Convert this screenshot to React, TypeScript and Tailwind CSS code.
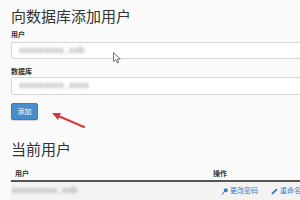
import React from 'react';

const font = { fontFamily: '"Liberation Sans", "Noto Sans CJK SC", sans-serif' };

function Blur({ text, className = '' }: { text: string; className?: string }) {
  return <span className={`blur-[1.4px] text-[#a8a8a8] font-bold ${className}`}>{text}</span>;
}

export default function App() {
  return (
    <div className="relative w-[300px] h-[200px] overflow-hidden bg-[#fafafa] text-[#333]" style={font}>
      <div className="w-[340px] pl-[11px] pt-[7px]">
        <h1 className="text-[15px] leading-[20px] h-[20px] font-normal">向数据库添加用户</h1>

        <div className="mt-[3px] text-[7px] leading-[10px] h-[10px] font-bold">用户</div>
        <div className="mt-[2px] h-[17px] bg-white border border-[#d6d6d6] rounded-[2px] flex items-center pl-[7px] text-[9px]">
          <Blur text="xxxxxxxxx_xxb" />
        </div>

        <div className="mt-[8px] text-[7px] leading-[10px] h-[10px] font-bold">数据库</div>
        <div className="h-[18px] bg-white border border-[#d6d6d6] rounded-[2px] flex items-center pl-[7px] text-[9px]">
          <Blur text="xxxxxxxxx_xxxx" />
        </div>

        <button className="mt-[8px] w-[27px] h-[17px] bg-[#4a8dcc] border border-[#3b7bb8] rounded-[2px] text-white text-[7px] leading-none flex items-center justify-center shadow-[0_1px_1px_rgba(0,0,0,0.15)]">
          添加
        </button>

        <h2 className="mt-[20px] text-[15px] leading-[20px] h-[20px] font-normal">当前用户</h2>

        <div className="mt-[8px] h-[14px] flex items-center text-[7px] font-bold border-b-2 border-[#555]">
          <div className="w-[202px] pl-[4px]">用户</div>
          <div>操作</div>
        </div>
        <div className="h-[18px] flex items-center text-[7px] bg-[#f3f3f3]">
          <div className="w-[210px] pl-[1px] text-[9px]">
            <Blur text="xxxxxxxxx_xxb" />
          </div>
          <div className="flex items-center gap-[2px] text-[#3a7cc2]">
            <svg width="7" height="7" viewBox="0 0 16 16" fill="#3a7cc2">
              <circle cx="11" cy="5" r="4.5" />
              <path d="M8 7 L1 14 L3 16 L4 15 L3 14 L4 13 L5 14 L6 13 L5 12 L10 8 Z" />
            </svg>
            <span>更改密码</span>
          </div>
          <div className="ml-[13px] flex items-center gap-[2px] text-[#3a7cc2]">
            <svg width="7" height="7" viewBox="0 0 16 16" fill="#3a7cc2">
              <path d="M12 1 L15 4 L5 14 L1 15 L2 11 Z" />
            </svg>
            <span>重命名</span>
          </div>
        </div>
      </div>

      {/* red annotation arrow */}
      <svg className="absolute left-[48px] top-[108px]" width="42" height="24" viewBox="0 0 42 24">
        <line x1="36" y1="19" x2="8" y2="7" stroke="#d8383a" strokeWidth="2" strokeLinecap="round" />
        <path d="M4 5 L13 5 L10 12 Z" fill="#d8383a" />
      </svg>

      {/* mouse cursor */}
      <svg className="absolute left-[113px] top-[52px]" width="8" height="12" viewBox="0 0 8 12">
        <path d="M0.5 0.5 L0.5 9.5 L2.8 7.5 L4.3 11 L5.6 10.4 L4.2 7.1 L7.2 7.1 Z" fill="#fff" stroke="#555" strokeWidth="0.8" />
      </svg>
    </div>
  );
}
